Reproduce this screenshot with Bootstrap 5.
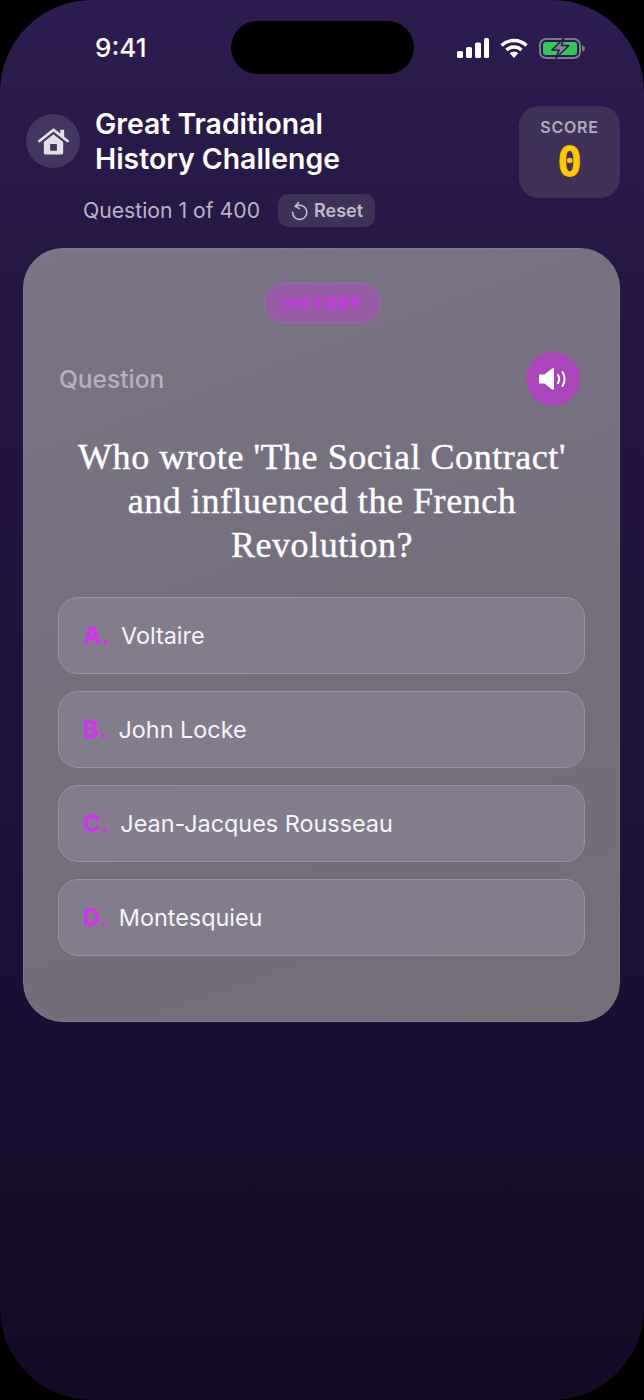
<!DOCTYPE html>
<html lang="en">
<head>
    <meta charset="UTF-8">
    <meta name="viewport" content="width=device-width, initial-scale=1.0">
    <title>Great Traditional History Challenge</title>
    <link href="https://cdn.jsdelivr.net/npm/bootstrap@5.3.0/dist/css/bootstrap.min.css" rel="stylesheet">
    <style>
        html, body { background: #000; margin: 0; height: 1400px; overflow: hidden; }
        body { font-family: "Inter", "Liberation Sans", sans-serif; }

        .phone-frame {
            width: 644px; height: 1400px; overflow: hidden; border-radius: 92px;
            background: linear-gradient(180deg, #2d1c50 0%, #251640 22%, #1a0f32 72%, #150b27 100%);
        }

        .status-wrap { padding-top: 21px; }
        .status-row { height: 53px; }
        .status-time { width: 231px; padding-left: 95px; color: #fff; font-size: 26px; font-weight: 500; line-height: 53px; }
        .status-icons { width: 230px; padding-left: 43px; gap: 11px; }
        .island { width: 183px; height: 53px; background: #000; border-radius: 27px; }

        .top-area { margin-top: 32px; padding: 0 24px 0 26px; }
        .home-circle { width: 54px; height: 54px; background: #453660; border-radius: 50%; margin-top: 8px; margin-right: 15px; }
        .game-title { font-size: 28.4px; font-weight: 600; line-height: 35px; color: #fff; margin: 0; }
        .sub-row { margin-top: 18px; padding-left: 57px; gap: 18px; }
        .q-count { font-size: 21.2px; color: #bab3c4; }
        .reset-pill { height: 33px; width: 97px; background: #403257; border-radius: 10px; border: 0; color: #bfb9c8; font-size: 18px; font-weight: 600; gap: 6px; padding: 0 0 0 13px; }
        .score-box { width: 101px; height: 92px; background: #403257; border-radius: 20px; padding-top: 11px; }
        .score-label { font-size: 16px; font-weight: 600; letter-spacing: .8px; color: #b3acbd; line-height: 20px; }
        .score-value { font-family: "DejaVu Sans Mono", monospace; font-size: 41px; font-weight: 700; color: #ffc800; -webkit-text-stroke: .6px #ffc800; line-height: 50px; }

        .quiz-panel {
            margin: 21px 24px 0 23px; height: 774px; border-radius: 40px; padding: 34px 34px 0 35px;
            background: linear-gradient(160deg, #7b7486 0%, #736d7c 55%, #746e7b 100%);
            border: 1px solid #7f7989;
        }
        .topic-pill { width: 117px; height: 40px; background: #955ba4; border: 1px solid #a263b1; border-radius: 20px; color: #c936e2; font-size: 16.5px; font-weight: 800; letter-spacing: 1px; }
        .q-head { margin-top: 29px; height: 54px; }
        .q-label { font-size: 24.5px; font-weight: 500; color: #b7b1bf; }
        .speak-btn { width: 54px; height: 54px; background: #a946b9; border-radius: 50%; border: 0; padding: 0; margin-right: 5px; }
        .q-text { font-family: "Liberation Serif", serif; font-size: 36px; letter-spacing: .55px; -webkit-text-stroke: .4px #fff; line-height: 44px; color: #fff; text-align: center; margin: 29px 0 30px; font-weight: 400; }
        .answer-list { gap: 17px; margin-left: -1px; }
        .answer-item { height: 77px; background: #837c8c; border: 1.5px solid #98929f; border-radius: 20px; padding-left: 24px; color: #f6f4f8; font-size: 23.4px; gap: 11px; }
        .answer-letter { color: #cd38e6; font-size: 24px; font-weight: 800; }
    </style>
</head>
<body>
    <div class="phone-frame">

        <!-- status bar -->
        <div class="status-wrap">
            <div class="status-row d-flex">
                <div class="status-time">9:41</div>
                <div class="island"></div>
                <div class="status-icons d-flex align-items-center">
                    <svg width="32" height="20" viewBox="0 0 32 20" fill="#fff">
                        <rect x="0" y="13" width="6" height="7" rx="1.5"/>
                        <rect x="9" y="9" width="6" height="11" rx="1.5"/>
                        <rect x="18" y="4.500" width="6" height="15.500" rx="1.5"/>
                        <rect x="27" y="0" width="5" height="20" rx="1.5"/>
                    </svg>
                    <svg width="28" height="20" viewBox="0 0 28 20" fill="none" stroke="#fff" stroke-width="3.4">
                        <path d="M1.500 7.500a18 18 0 0 1 25 0"/>
                        <path d="M6.500 12a11 11 0 0 1 15 0"/>
                        <path d="M14 20l-4.300-4.700a6 6 0 0 1 8.600 0z" fill="#fff" stroke="none"/>
                    </svg>
                    <svg width="46" height="22" viewBox="0 0 46 22">
                        <rect x="1" y="2" width="40" height="19" rx="6" fill="none" stroke="#807790" stroke-width="2"/>
                        <rect x="4" y="5" width="34" height="13" rx="3" fill="#35c759"/>
                        <path d="M43 8.500c2 .3 3 1.500 3 3s-1 2.700-3 3z" fill="#807790"/>
                        <path d="M25 1L13 13h7l-3 8 13-12.500h-7.500z" fill="#8a8198" stroke="#2a1a4a" stroke-width="1.600" stroke-linejoin="round"/>
                    </svg>
                </div>
            </div>
        </div>

        <!-- header -->
        <div class="top-area d-flex justify-content-between align-items-start">
            <div>
                <div class="d-flex align-items-start">
                    <div class="home-circle d-flex align-items-center justify-content-center">
                        <svg width="31" height="28" viewBox="0 0 32 28">
                            <path d="M1.500 14L16 2.500 30.500 14" fill="none" stroke="#e3dfe8" stroke-width="2.800" stroke-linecap="round" stroke-linejoin="round"/>
                            <path d="M23 2.500h4v8l-4-3z" fill="#e3dfe8"/>
                            <path fill-rule="evenodd" d="M6 15L16 7l10 8v11a2 2 0 0 1-2 2H8a2 2 0 0 1-2-2zM12.500 17v7h7v-7z" fill="#e3dfe8"/>
                        </svg>
                    </div>
                    <h1 class="game-title">Great Traditional<br>History Challenge</h1>
                </div>
                <div class="sub-row d-flex align-items-center">
                    <span class="q-count">Question 1 of 400</span>
                    <button type="button" class="reset-pill d-flex align-items-center">
                        <svg width="17" height="20" viewBox="0 0 18 20" fill="none" stroke="#c9c3d1" stroke-width="1.600" stroke-linecap="round" stroke-linejoin="round">
                            <path d="M5 5.200a7.500 7.500 0 1 1-3.300 6"/>
                            <path d="M8 1L4.500 5l4.300 2.500"/>
                        </svg>
                        Reset
                    </button>
                </div>
            </div>
            <div class="score-box text-center">
                <div class="score-label">SCORE</div>
                <div class="score-value">0</div>
            </div>
        </div>

        <!-- question card -->
        <div class="quiz-panel">
            <div class="d-flex justify-content-center">
                <span class="topic-pill d-flex align-items-center justify-content-center">HISTORY</span>
            </div>
            <div class="q-head d-flex justify-content-between align-items-center">
                <span class="q-label">Question</span>
                <button type="button" class="speak-btn d-flex align-items-center justify-content-center">
                    <svg width="28" height="24" viewBox="0 0 28 24">
                        <path d="M1 7.500h4.500L13 1.500c1-.6 2-.2 2 1.200v18.600c0 1.400-1 1.800-2 1.200l-7.500-6H1c-.6 0-1-.4-1-1V8.500c0-.6.4-1 1-1z" fill="#fff"/>
                        <path d="M19 8c1.500 2.500 1.500 5.500 0 8M23.500 5c2.700 4.500 2.700 9.500 0 14" fill="none" stroke="#fff" stroke-width="2" stroke-linecap="round"/>
                    </svg>
                </button>
            </div>
            <h2 class="q-text">Who wrote 'The Social Contract'<br>and influenced the French<br>Revolution?</h2>
            <div class="answer-list d-flex flex-column">
                <div class="answer-item d-flex align-items-center"><span class="answer-letter">A.</span><span>Voltaire</span></div>
                <div class="answer-item d-flex align-items-center"><span class="answer-letter">B.</span><span>John Locke</span></div>
                <div class="answer-item d-flex align-items-center"><span class="answer-letter">C.</span><span>Jean-Jacques Rousseau</span></div>
                <div class="answer-item d-flex align-items-center"><span class="answer-letter">D.</span><span>Montesquieu</span></div>
            </div>
        </div>
    </div>
    <script src="https://cdn.jsdelivr.net/npm/bootstrap@5.3.0/dist/js/bootstrap.bundle.min.js"></script>
</body>
</html>
